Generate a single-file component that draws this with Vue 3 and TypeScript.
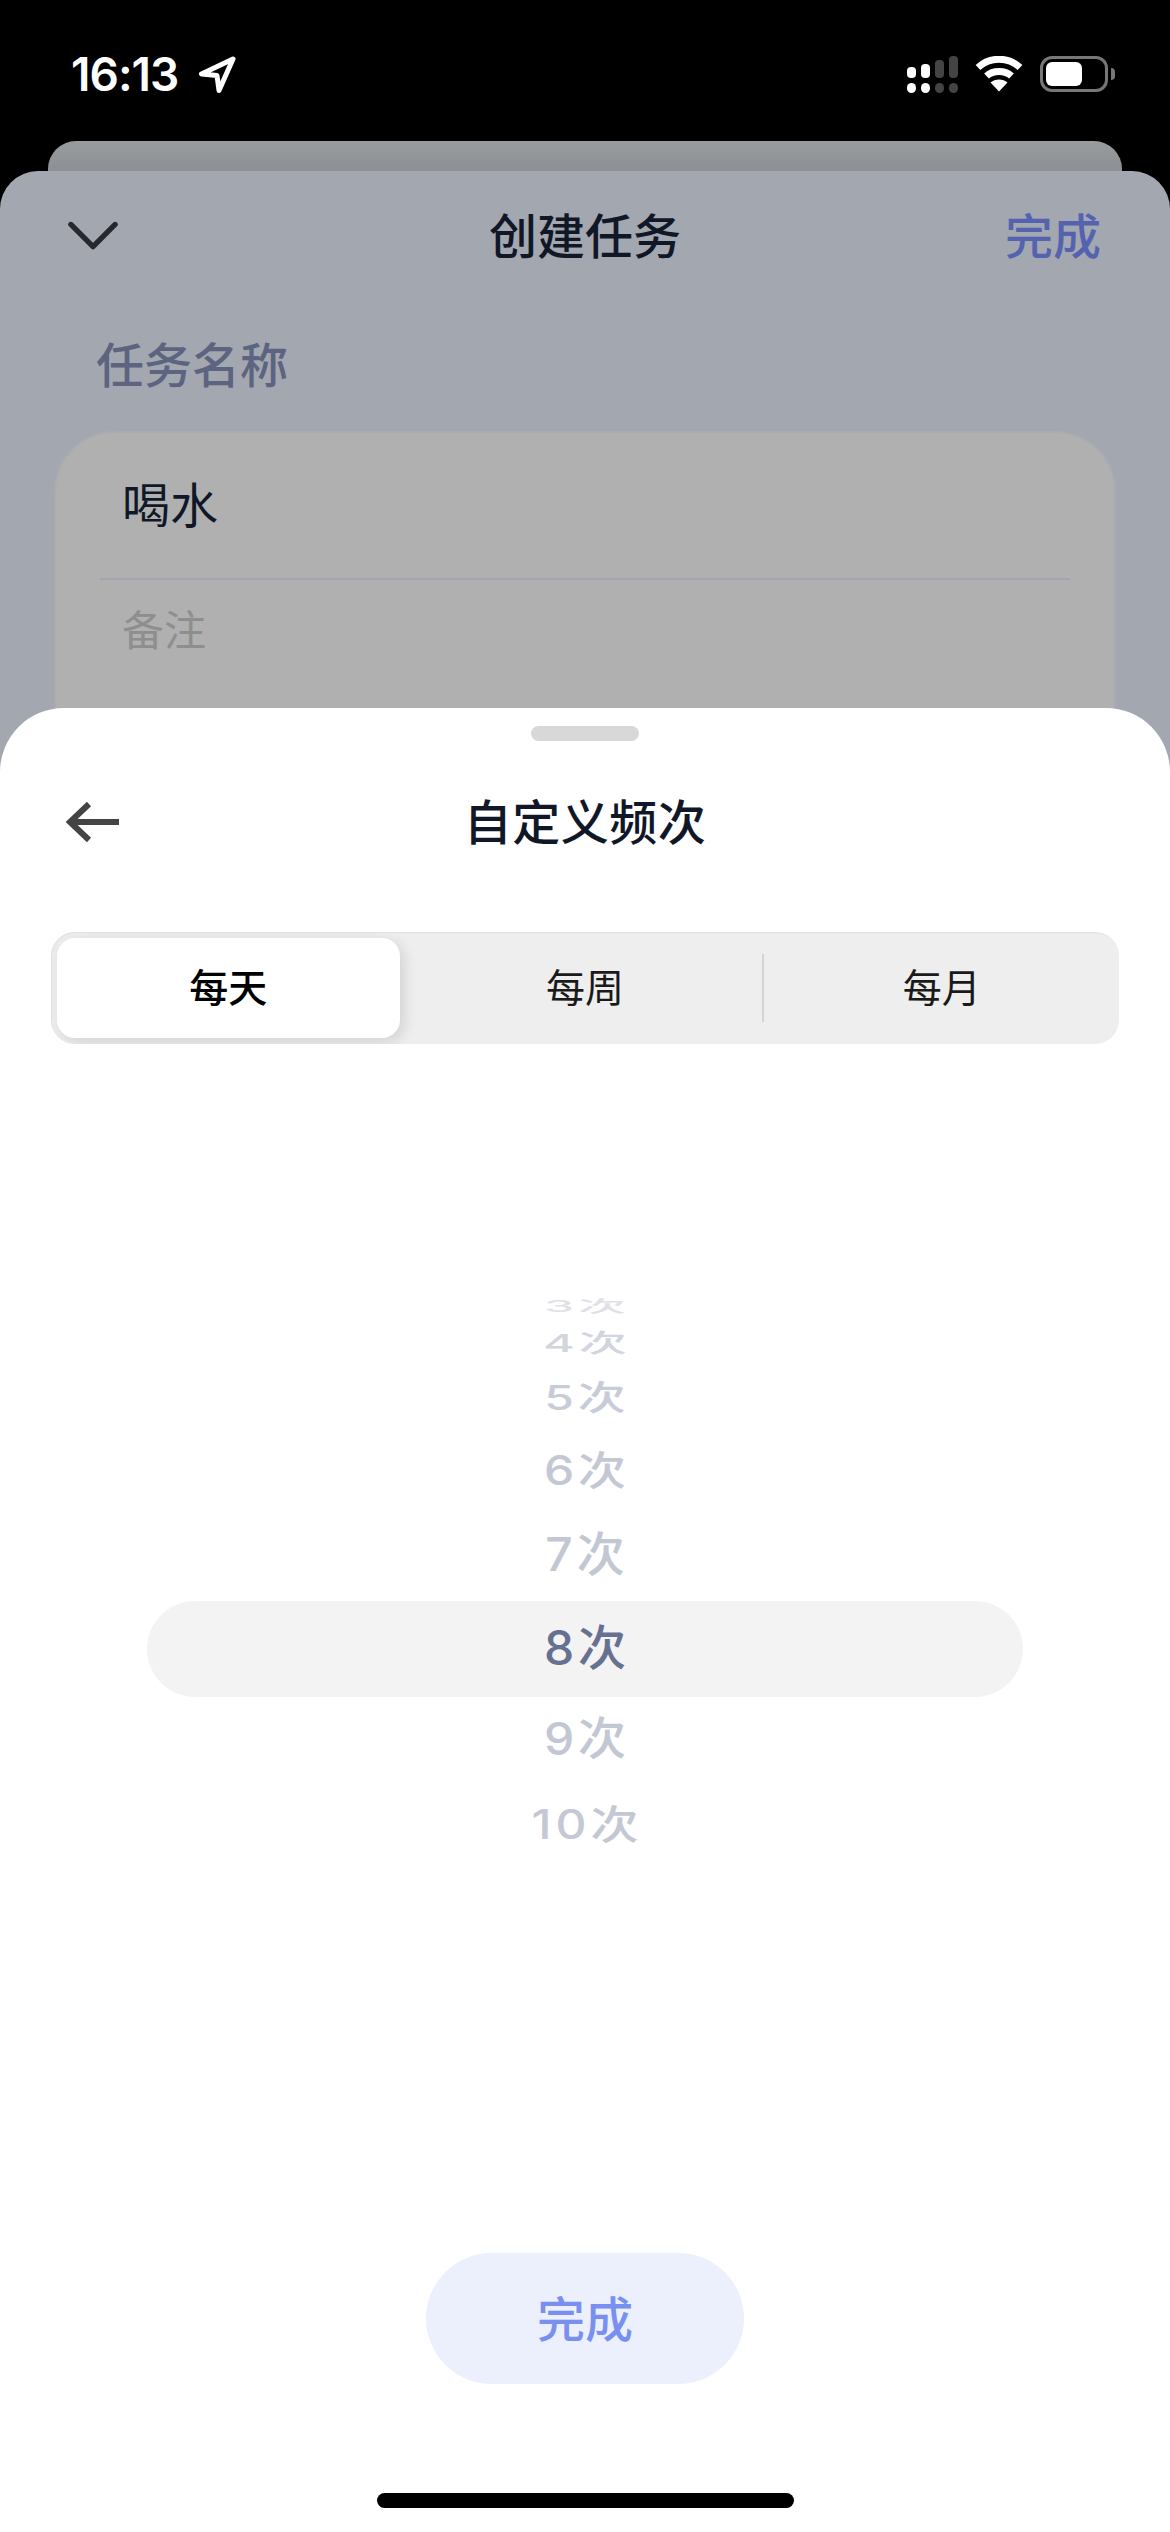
<script setup lang="ts">
interface WheelRow {
  label: string;
  height: number;
  squash: number;
  color: string;
  selected?: boolean;
}

const tabs = ["每天", "每周", "每月"];

// row heights and squash follow the 3d wheel of the native picker
const rows: WheelRow[] = [
  { label: "3次", height: 30, squash: 0.34, color: "#dfe1e7" },
  { label: "4次", height: 44, squash: 0.52, color: "#d2d5de" },
  { label: "5次", height: 66, squash: 0.7, color: "#c8ccd8" },
  { label: "6次", height: 79, squash: 0.84, color: "#c4c8d4" },
  { label: "7次", height: 90, squash: 0.96, color: "#c2c7d3" },
  { label: "8次", height: 96, squash: 1, color: "#667091", selected: true },
  { label: "9次", height: 86, squash: 0.94, color: "#c2c7d3" },
  { label: "10次", height: 86, squash: 0.84, color: "#c4c8d4" },
];
</script>

<template>
  <div class="screen">
    <header class="status">
      <div class="status-left">
        <span class="time">16:13</span>
        <svg class="loc" width="38" height="38" viewBox="0 0 38 38">
          <path d="M35 3 L3.5 18 L19 19.5 L21 34.5 Z" fill="none" stroke="#fff" stroke-width="5" stroke-linejoin="round" />
        </svg>
      </div>
      <div class="status-right">
        <svg width="51" height="37" viewBox="0 0 51 37">
          <rect x="0" y="11" width="9" height="11" rx="4" fill="#fff" />
          <rect x="14" y="8" width="9" height="14" rx="4" fill="#fff" />
          <rect x="28" y="4" width="9" height="18" rx="4" fill="#444" />
          <rect x="42" y="0" width="9" height="22" rx="4" fill="#444" />
          <rect x="0" y="27" width="9" height="10" rx="4.5" fill="#fff" />
          <rect x="14" y="27" width="9" height="10" rx="4.5" fill="#fff" />
          <rect x="28" y="27" width="9" height="10" rx="4.5" fill="#444" />
          <rect x="42" y="27" width="9" height="10" rx="4.5" fill="#444" />
        </svg>
        <svg class="wifi" width="48" height="36" viewBox="0 0 48 36">
          <path d="M3 11.5 C15 0.5 33 0.5 45 11.5" fill="none" stroke="#fff" stroke-width="7" />
          <path d="M11.5 20 C18 14 30 14 36.5 20" fill="none" stroke="#fff" stroke-width="7" />
          <path d="M24 35.5 L15.5 26.5 C20 22.5 28 22.5 32.5 26.5 Z" fill="#fff" />
        </svg>
        <div class="battery">
          <div class="battery-fill"></div>
          <div class="battery-nub"></div>
        </div>
      </div>
    </header>

    <div class="back-card"></div>

    <section class="task-sheet">
      <div class="nav task-nav">
        <svg class="nav-left chevron" width="52" height="30" viewBox="0 0 52 30">
          <path d="M3 3 L26 26 L49 3" fill="none" stroke="#26282d" stroke-width="5.5" stroke-linecap="round" stroke-linejoin="round" />
        </svg>
        <div class="nav-title">创建任务</div>
        <div class="nav-action">完成</div>
      </div>
      <div class="field-label">任务名称</div>
      <div class="field-card">
        <div class="field-name">喝水</div>
        <div class="field-line"></div>
        <div class="field-note">备注</div>
      </div>
    </section>

    <section class="picker-sheet">
      <div class="handle"></div>
      <div class="nav sheet-nav">
        <svg class="nav-left" width="56" height="42" viewBox="0 0 56 42">
          <path d="M24 3 L5 21 L24 39 M5 21 H54" fill="none" stroke="#444" stroke-width="6" stroke-linejoin="miter" />
        </svg>
        <div class="nav-title">自定义频次</div>
      </div>

      <div class="segment">
        <div
          v-for="(tab, i) in tabs"
          :key="tab"
          class="tab"
          :class="{ 'tab--on': i === 0, 'tab--split': i === 1 }"
        >
          {{ tab }}
        </div>
      </div>

      <div class="wheel">
        <div
          v-for="row in rows"
          :key="row.label"
          class="wheel-row"
          :class="{ 'wheel-row--on': row.selected }"
          :style="{ height: row.height + 'px', color: row.color }"
        >
          <span class="wheel-text" :style="{ transform: `scaleY(${row.squash})` }">{{ row.label }}</span>
        </div>
      </div>

      <button class="done" type="button">完成</button>
      <div class="home"></div>
    </section>
  </div>
</template>

<style>
html,
body {
  margin: 0;
  background: #000;
}
</style>

<style scoped>
.screen {
  position: relative;
  width: 1170px;
  height: 2532px;
  overflow: hidden;
  display: flex;
  flex-direction: column;
  background: #000;
  font-family: Inter, "Noto Sans CJK SC", sans-serif;
}

.status {
  height: 141px;
  flex: none;
  box-sizing: border-box;
  padding: 56px 62px 0 71px;
  display: flex;
  justify-content: space-between;
  align-items: flex-start;
  color: #fff;
}
.status-left {
  display: flex;
  align-items: center;
  gap: 20px;
  height: 37px;
}
.time {
  font-size: 46px;
  font-weight: 600;
  line-height: 37px;
  letter-spacing: -1px;
}
.status-right {
  display: flex;
  align-items: flex-start;
  gap: 17px;
}
.battery {
  position: relative;
  box-sizing: border-box;
  width: 68px;
  height: 36px;
  border: 3px solid #777;
  border-radius: 12px;
  padding: 3px;
}
.battery-fill {
  width: 36px;
  height: 24px;
  background: #fff;
  border-radius: 6px;
}
.battery-nub {
  position: absolute;
  right: -10px;
  top: 9px;
  width: 4px;
  height: 12px;
  background: #777;
  border-radius: 0 6px 6px 0;
}

.back-card {
  flex: none;
  height: 30px;
  margin: 0 48px;
  background: linear-gradient(#999c9f, #8d9092);
  border-radius: 28px 28px 0 0;
}

.task-sheet {
  flex: 1;
  background: #a3a7b0;
  border-radius: 38px 38px 0 0;
  padding-top: 25px;
}

.nav {
  position: relative;
  height: 80px;
  display: flex;
  align-items: center;
  justify-content: center;
}
.nav-left {
  position: absolute;
  left: 65px;
  top: 50%;
  transform: translateY(-50%);
}
.chevron {
  left: 68px;
  width: 50px;
}
.nav-title {
  font-size: 48px;
  font-weight: 500;
  line-height: 80px;
  color: #101828;
}
.task-nav .nav-title {
  padding-top: 2px;
}
.sheet-nav .nav-title {
  padding-top: 2px;
  letter-spacing: 0.5px;
}
.nav-action {
  position: absolute;
  right: 69px;
  top: 1px;
  font-size: 48px;
  font-weight: 500;
  line-height: 80px;
  color: #5562b0;
}

.field-label {
  margin: 55px 0 0 96px;
  height: 70px;
  font-size: 48px;
  font-weight: 500;
  line-height: 70px;
  color: #5c6480;
}
.field-card {
  margin: 30px 54px 0;
  height: 500px;
  box-sizing: border-box;
  padding: 0 44px;
  background: #b0b0b0;
  border: 2px solid #a9abb0;
  border-radius: 60px;
}
.field-name {
  height: 145px;
  font-size: 48px;
  line-height: 145px;
  padding-left: 22px;
  color: #101828;
}
.field-line {
  height: 2px;
  background: #a3a5ae;
}
.field-note {
  height: 102px;
  font-size: 42px;
  line-height: 102px;
  padding-left: 22px;
  color: #8e8e8e;
}

.picker-sheet {
  position: absolute;
  left: 0;
  right: 0;
  top: 708px;
  bottom: 0;
  display: flex;
  flex-direction: column;
  background: #fff;
  border-radius: 64px 64px 0 0;
}
.handle {
  flex: none;
  align-self: center;
  width: 108px;
  height: 15px;
  margin-top: 18px;
  margin-bottom: 41px;
  background: #d8d8d8;
  border-radius: 8px;
}

.segment {
  flex: none;
  margin: 70px 51px 0;
  height: 112px;
  box-sizing: border-box;
  padding: 6px;
  display: grid;
  grid-template-columns: repeat(3, 1fr);
  gap: 14px;
  background: #eeeeee;
  border-radius: 24px;
  overflow: hidden;
  box-shadow: inset 1px 1px 2px rgba(0, 0, 0, 0.06);
}
.tab {
  position: relative;
  box-sizing: border-box;
  padding-bottom: 6px;
  display: flex;
  align-items: center;
  justify-content: center;
  font-size: 39px;
  color: #1a1a1a;
}
.tab--on {
  background: #fff;
  color: #000;
  font-weight: 500;
  border-radius: 18px;
  box-shadow: 4px 4px 14px rgba(0, 0, 0, 0.12);
}
.tab--split::after {
  content: "";
  position: absolute;
  right: -8px;
  top: 16px;
  bottom: 16px;
  width: 2px;
  background: #d4d4d4;
}

.wheel {
  flex: none;
  margin-top: 248px;
  display: flex;
  flex-direction: column;
}
.wheel-row {
  flex: none;
  display: flex;
  align-items: center;
  justify-content: center;
  font-size: 48px;
  font-weight: 500;
  overflow: hidden;
}
.wheel-row--on {
  margin: 0 147px;
  background: #f3f3f4;
  border-radius: 48px;
}
.wheel-text {
  display: block;
  line-height: 60px;
  letter-spacing: 4px;
  padding-left: 4px;
  margin-top: -2px;
}

.done {
  flex: none;
  align-self: center;
  width: 318px;
  height: 131px;
  margin-top: 384px;
  padding: 0 0 5px;
  border: 0;
  border-radius: 66px;
  background: #ebf0fc;
  color: #7a90f0;
  font-family: inherit;
  font-size: 48px;
  font-weight: 500;
}
.home {
  flex: none;
  align-self: center;
  width: 417px;
  height: 15px;
  margin-top: 109px;
  background: #000;
  border-radius: 8px;
}
</style>
